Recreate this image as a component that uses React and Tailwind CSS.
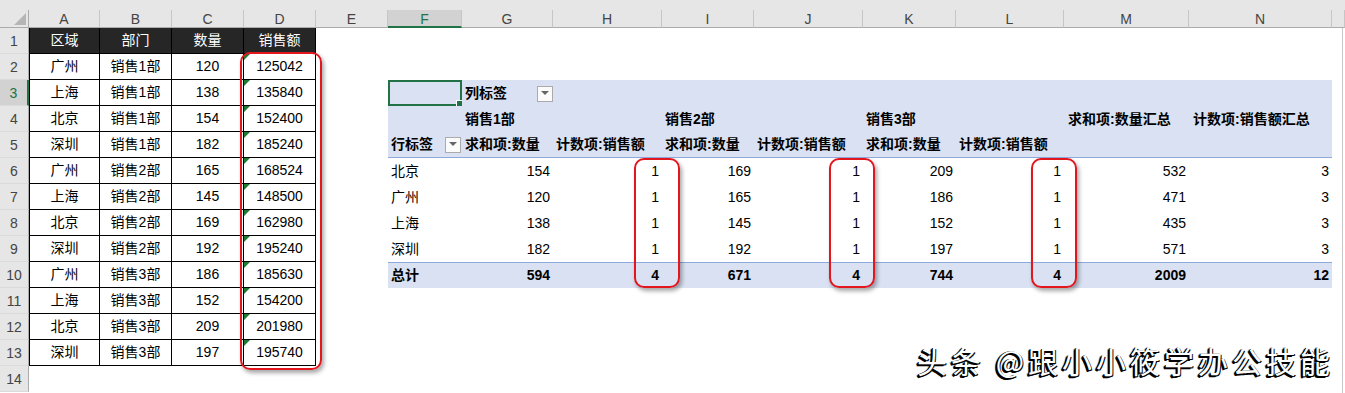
import React from "react";

const W = [
  "w-[29px]", "w-[71px]", "w-[72px]", "w-[72px]", "w-[72px]", "w-[72px]",
  "w-[74px]", "w-[91px]", "w-[109px]", "w-[92px]", "w-[109px]", "w-[93px]",
  "w-[108px]", "w-[125px]", "w-[143px]", "flex-1",
];
const LETTERS = ["", "A", "B", "C", "D", "E", "F", "G", "H", "I", "J", "K", "L", "M", "N", ""];

const SRC = [
  ["广州", "销售1部", "120", "125042"],
  ["上海", "销售1部", "138", "135840"],
  ["北京", "销售1部", "154", "152400"],
  ["深圳", "销售1部", "182", "185240"],
  ["广州", "销售2部", "165", "168524"],
  ["上海", "销售2部", "145", "148500"],
  ["北京", "销售2部", "169", "162980"],
  ["深圳", "销售2部", "192", "195240"],
  ["广州", "销售3部", "186", "185630"],
  ["上海", "销售3部", "152", "154200"],
  ["北京", "销售3部", "209", "201980"],
  ["深圳", "销售3部", "197", "195740"],
];

const PIVOT = [
  ["北京", "154", "1", "169", "1", "209", "1", "532", "3"],
  ["广州", "120", "1", "165", "1", "186", "1", "471", "3"],
  ["上海", "138", "1", "145", "1", "152", "1", "435", "3"],
  ["深圳", "182", "1", "192", "1", "197", "1", "571", "3"],
];
const TOTAL = ["总计", "594", "4", "671", "4", "744", "4", "2009", "12"];

function Cell({ i, className = "", children }) {
  return (
    <div className={`${W[i]} shrink-0 h-full box-border flex items-center relative ${className}`}>
      {children}
    </div>
  );
}

function DropBtn() {
  return (
    <div className="w-[16px] h-[16px] box-border border border-[#ababab] bg-[#fbfbfb] flex items-center justify-center shrink-0">
      <svg width="8" height="5" viewBox="0 0 8 5">
        <polygon points="0,0 8,0 4,4" fill="#666" />
      </svg>
    </div>
  );
}

function Row({ n, active = false, children }) {
  return (
    <div className="flex h-[26px]">
      <div
        className={`w-[29px] shrink-0 h-full box-border flex items-end justify-center pb-[1px] text-[14px] border-b border-b-[#dadada] ${
          active
            ? "bg-[#d2d2d2] text-[#217346] border-r-2 border-r-[#217346]"
            : "bg-[#e6e6e6] text-[#444] border-r border-r-[#ababab]"
        }`}
      >
        {n}
      </div>
      {children}
    </div>
  );
}

function Blank({ from, to, className = "" }) {
  const out = [];
  for (let i = from; i <= to; i++) out.push(<Cell key={i} i={i} className={className} />);
  return out;
}

const BLUE = "bg-[#d9e1f2]";

function SrcCells({ data, header = false }) {
  return data.map((t, k) => (
    <Cell
      key={k}
      i={k + 1}
      className={`justify-center border-r border-b border-black ${k === 0 ? "border-l" : ""} ${
        header ? "bg-[#262626] text-white" : "bg-white text-black"
      }`}
    >
      {!header && k === 3 && (
        <span className="absolute left-0 top-0 w-0 h-0 border-t-[6px] border-t-[#1e7b34] border-r-[6px] border-r-transparent" />
      )}
      {t}
    </Cell>
  ));
}

function PivotRow({ data, total = false }) {
  return data.map((t, k) => (
    <Cell
      key={k}
      i={k + 6}
      className={`${total ? BLUE + " border-t border-t-[#8ea9db] font-bold" : "bg-white"} ${
        k === 0 ? "justify-start pl-[3px]" : "justify-end pr-[3px]"
      }`}
    >
      {t}
    </Cell>
  ));
}

function RedBox({ className }) {
  return (
    <div
      className={`absolute border-2 border-[#e3151d] rounded-[10px] shadow-[2px_3px_4px_rgba(0,0,0,0.35)] pointer-events-none ${className}`}
    />
  );
}

export default function App() {
  return (
    <div className="relative w-[1345px] h-[393px] overflow-hidden bg-white text-[14px] text-black font-['Liberation_Sans','Noto_Sans_CJK_SC',sans-serif]">
      {/* top strip */}
      <div className="h-[10px] bg-[#e6e6e6]" />
      {/* column header */}
      <div className="flex h-[18px] bg-[#e6e6e6]">
        {LETTERS.map((l, i) =>
          i === 0 ? (
            <div key={i} className="w-[29px] shrink-0 h-full box-border border-r border-b border-[#ababab] flex items-end justify-end pr-[2px] pb-[2px]">
              <svg width="12" height="12" viewBox="0 0 12 12">
                <polygon points="12,0 12,12 0,12" fill="#b5b5b5" />
              </svg>
            </div>
          ) : (
            <div
              key={i}
              className={`${W[i]} shrink-0 h-full box-border flex items-center justify-center pt-[2px] ${
                i === 6
                  ? "bg-[#d2d2d2] text-[#217346] border-b-2 border-b-[#217346] border-r border-r-[#c6c6c6]"
                  : "text-[#444] border-b border-b-[#ababab] border-r border-r-[#c6c6c6]"
              }`}
            >
              {l}
            </div>
          )
        )}
      </div>

      {/* row 1 */}
      <Row n={1}>
        <SrcCells data={["区域", "部门", "数量", "销售额"]} header />
        <Blank from={5} to={15} />
      </Row>

      {SRC.map((r, idx) => {
        const n = idx + 2;
        return (
          <Row key={n} n={n} active={n === 3}>
            <SrcCells data={r} />
            <Cell i={5} />
            {n === 3 && (
              <>
                <Cell i={6} className={`${BLUE} border-2 border-[#217346]`}>
                  <span className="absolute -right-[4px] -bottom-[4px] w-[6px] h-[6px] bg-[#217346] border border-white box-content" />
                </Cell>
                <Cell i={7} className={`${BLUE} justify-between pl-[3px] pt-[1px]`}>
                  <span className="font-bold">列标签</span>
                  <DropBtn />
                </Cell>
                <Blank from={8} to={14} className={BLUE} />
              </>
            )}
            {n === 4 && (
              <>
                <Cell i={6} className={BLUE} />
                <Cell i={7} className={`${BLUE} pl-[3px] font-bold`}>销售1部</Cell>
                <Cell i={8} className={BLUE} />
                <Cell i={9} className={`${BLUE} pl-[3px] font-bold`}>销售2部</Cell>
                <Cell i={10} className={BLUE} />
                <Cell i={11} className={`${BLUE} pl-[3px] font-bold`}>销售3部</Cell>
                <Cell i={12} className={BLUE} />
                <Cell i={13} className={`${BLUE} pl-[4px] font-bold`}>求和项:数量汇总</Cell>
                <Cell i={14} className={`${BLUE} pl-[4px] font-bold`}>计数项:销售额汇总</Cell>
              </>
            )}
            {n === 5 && (
              <>
                <Cell i={6} className={`${BLUE} justify-between pl-[3px] pr-[1px] border-b border-b-[#8ea9db] font-bold`}>
                  <span>行标签</span>
                  <DropBtn />
                </Cell>
                {["求和项:数量", "计数项:销售额", "求和项:数量", "计数项:销售额", "求和项:数量", "计数项:销售额", "", ""].map((t, k) => (
                  <Cell key={k} i={k + 7} className={`${BLUE} pl-[3px] border-b border-b-[#8ea9db] font-bold`}>
                    {t}
                  </Cell>
                ))}
              </>
            )}
            {n >= 6 && n <= 9 && <PivotRow data={PIVOT[n - 6]} />}
            {n === 10 && <PivotRow data={TOTAL} total />}
            {n >= 3 && n <= 10 ? <Cell i={15} /> : null}
            {(n === 2 || n > 10) && <Blank from={6} to={15} />}
          </Row>
        );
      })}

      <Row n={14}>
        <Blank from={1} to={15} />
      </Row>

      {/* right edge line */}
      <div className="absolute right-[2px] top-[28px] bottom-0 w-px bg-[#c8c8c8]" />

      {/* red highlight boxes */}
      <RedBox className="left-[240px] top-[52px] w-[82px] h-[318px]" />
      <RedBox className="left-[634px] top-[158px] w-[46px] h-[130px]" />
      <RedBox className="left-[829px] top-[158px] w-[46px] h-[130px]" />
      <RedBox className="left-[1031px] top-[158px] w-[46px] h-[130px]" />

      {/* watermark */}
      <div className="absolute left-[917px] top-[340px] text-[30px] leading-[40px] tracking-[4px] text-white font-['Noto_Sans_CJK_SC',sans-serif] [text-shadow:-1px_1px_0_#000,-2px_2px_0_#000,-1px_0_0_#000,0_1px_0_#000,1px_1px_0_#111,-2px_1px_1px_#000]">
        头条 @跟小小筱学办公技能
      </div>
    </div>
  );
}
